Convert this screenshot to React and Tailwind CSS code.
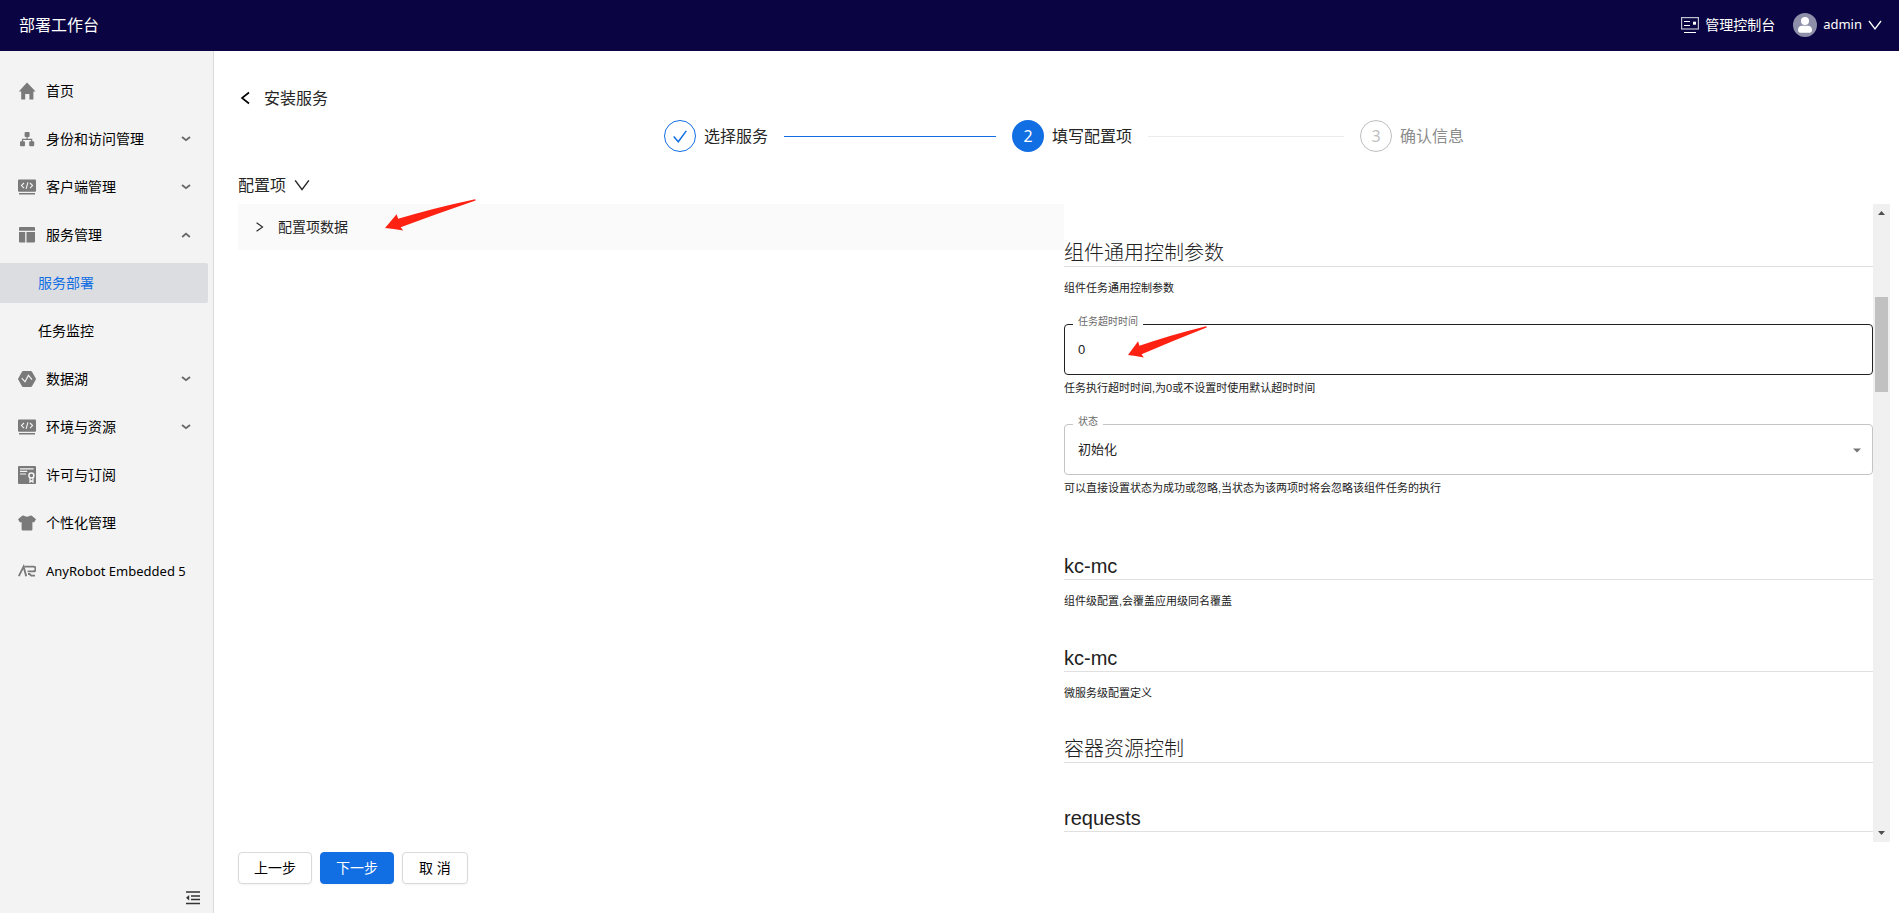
import React, { useState } from 'react';

/* ── Icons ─────────────────────────────────────────────────────────── */

function HomeIcon() {
    return (
        <svg className="w-[18px] h-[18px]" viewBox="0 0 18 18" fill="currentColor">
            <path d="M9 .6 17.6 9.6H15.4V17.4H11.4V12H7.2V17.4H3.2V9.6H.8Z" />
        </svg>
    );
}

function OrgIcon() {
    return (
        <svg className="w-[18px] h-[18px]" viewBox="0 0 18 18" fill="currentColor">
            <rect x="6.6" y="2" width="5" height="5" rx="1" />
            <rect x="2" y="11.2" width="5" height="5" rx="1" />
            <rect x="11.2" y="11.2" width="5" height="5" rx="1" />
            <path d="M9.1 6.5v3M4.5 12V9.4h9.2V12" fill="none" stroke="currentColor" strokeWidth="1.2" />
        </svg>
    );
}

function CodeIcon() {
    return (
        <svg className="w-[18px] h-[18px]" viewBox="0 0 18 18">
            <rect x="0" y="1.5" width="18" height="12.2" rx="1" fill="currentColor" />
            <rect x="1" y="15" width="16" height="1.5" fill="currentColor" />
            <path d="M6 5 3.4 7.6 6 10.2M12 5l2.6 2.6L12 10.2M9.9 4.4 8.1 10.8" fill="none" stroke="#f3f3f3" strokeWidth="1.1" />
        </svg>
    );
}

function LayoutIcon() {
    return (
        <svg className="w-[18px] h-[18px]" viewBox="0 0 18 18" fill="currentColor">
            <path d="M1 2a1 1 0 0 1 1-1h14a1 1 0 0 1 1 1v2.8H1z" />
            <path d="M1 6h6.2v10.5H2a1 1 0 0 1-1-1zM8.5 6H17v9.5a1 1 0 0 1-1 1H8.5z" />
        </svg>
    );
}

function LakeIcon() {
    return (
        <svg className="w-[18px] h-[18px]" viewBox="0 0 18 18">
            <path d="M5.2 1h7.6a1.4 1.4 0 0 1 1.2.7l3.7 6.5a1.6 1.6 0 0 1 0 1.6L14 16.3a1.4 1.4 0 0 1-1.2.7H5.2a1.4 1.4 0 0 1-1.2-.7L.3 9.8a1.6 1.6 0 0 1 0-1.6L4 1.7A1.4 1.4 0 0 1 5.2 1z" fill="currentColor" />
            <path d="M3.8 8.2 7 11.8 10.4 5.4 14 9.6" fill="none" stroke="#f3f3f3" strokeWidth="1.2" />
        </svg>
    );
}

function LicenseIcon() {
    return (
        <svg className="w-[18px] h-[18px]" viewBox="0 0 18 18">
            <rect width="18" height="18" rx="1" fill="currentColor" />
            <path d="M2 2.8h13.6M2 5.4h7.2M2 8h6" stroke="#f3f3f3" strokeWidth="1.2" />
            <circle cx="13.4" cy="9.4" r="2.5" fill="none" stroke="#f3f3f3" strokeWidth="1.5" />
            <path d="M12 11.5V16l1.4-1.1L14.9 16v-4.5" fill="none" stroke="#f3f3f3" strokeWidth="1.3" />
        </svg>
    );
}

function ShirtIcon() {
    return (
        <svg className="w-[18px] h-[18px]" viewBox="0 0 18 18" fill="currentColor">
            <path d="M5.8 1.6c1 1.5 5.4 1.5 6.4 0l1.6.2L18 5.2l-2 3.4-1.6-.7v7.3a1.2 1.2 0 0 1-1.2 1.2H4.8a1.2 1.2 0 0 1-1.2-1.2V7.9l-1.6.7L0 5.2l4.2-3.4z" />
        </svg>
    );
}

function RobotIcon() {
    return (
        <svg className="w-[18px] h-[18px]" viewBox="0 0 18 18" fill="none" stroke="currentColor" strokeWidth="1.9">
            <path d="M.8 14.2 5.6 4.6 8.2 14.2" />
            <path d="M6.4 4.6h8.8a2.3 2.3 0 0 1 0 4.8H9.6M10 12h1.6l1.6 1.6H17" />
        </svg>
    );
}

function ConsoleIcon() {
    return (
        <svg className="w-[18px] h-[18px]" viewBox="0 0 18 18" fill="none" stroke="currentColor">
            <rect x=".6" y="1.6" width="16.8" height="11.4" strokeWidth="1.2" opacity=".75" />
            <path d="M3 5.5h6M3 9.5h6M3 16.5h12" />
            <path d="M12 7.2h3" strokeWidth="3" />
        </svg>
    );
}

function AvatarIcon() {
    return (
        <svg className="w-6 h-6" viewBox="0 0 24 24">
            <circle cx="12" cy="12" r="12" fill="#8e8fa9" />
            <circle cx="12" cy="8" r="4" fill="#fff" />
            <path d="M5 17c0-3 2-4.2 4-4.2h6c2 0 4 1.200 4 4.200 0 2-1 2.700-2.400 2.700H7.400C6 19.700 5 19 5 17z" fill="#fff" />
        </svg>
    );
}

function CollapseIcon() {
    return (
        <svg className="w-4 h-4" viewBox="0 0 16 16" fill="none" stroke="currentColor" strokeWidth="1.3">
            <path d="M1 2h14M6 6h9M6 9.500h9M1 13.500h14" />
            <path d="M4.200 5v5.500L1 7.750z" fill="currentColor" stroke="none" />
        </svg>
    );
}

// thin angle bracket, used for every chevron except the ones in the menu
function Angle({ className, d = 'M1 3l6 8 6-8', width = 1.3 }) {
    return (
        <svg className={className} viewBox="0 0 14 14" fill="none" stroke="currentColor" strokeWidth={width}>
            <path d={d} />
        </svg>
    );
}

function MenuChevron({ open }) {
    return (
        <svg className="w-2.5 h-2.5 text-[#666]" viewBox="0 0 10 10" fill="none" stroke="currentColor" strokeWidth="1.8">
            <path d={open ? 'M1.200 7 5 3.600 8.800 7' : 'M1 3 5 6.200 9 3'} />
        </svg>
    );
}

function RedArrow({ className }) {
    return (
        <svg className={className} viewBox="0 0 90 32" preserveAspectRatio="none" fill="#ff2213">
            <path d="M0 29 11.500 15.300 13 19.800Q48 9 88 .4 90 .2 89.600 1.400 53 14 15.500 28.200L18 31.600Q8 29.500 0 29z" />
        </svg>
    );
}

/* ── Sidebar ───────────────────────────────────────────────────────── */

const MENU = [
    { label: '首页', Icon: HomeIcon },
    { label: '身份和访问管理', Icon: OrgIcon, group: true },
    { label: '客户端管理', Icon: CodeIcon, group: true },
    { label: '服务管理', Icon: LayoutIcon, group: true, children: ['服务部署', '任务监控'] },
    { label: '数据湖', Icon: LakeIcon, group: true },
    { label: '环境与资源', Icon: CodeIcon, group: true },
    { label: '许可与订阅', Icon: LicenseIcon },
    { label: '个性化管理', Icon: ShirtIcon },
    { label: 'AnyRobot Embedded 5', Icon: RobotIcon, latin: true },
];

function Sidebar() {
    const [active, setActive] = useState('服务部署');

    return (
        <aside className="w-[214px] shrink-0 bg-[#f3f3f3] border-r border-[#dcdcdc] flex flex-col">
            <nav className="flex-1 pt-5 flex flex-col gap-2 text-sm text-black">
                {MENU.map(({ label, Icon, group, latin, children }) => (
                    <React.Fragment key={label}>
                        <button className="h-10 pl-[18px] pr-[22px] flex items-center gap-2.5 text-left whitespace-nowrap">
                            <span className="text-[#7a7a7a]"><Icon /></span>
                            <span className={latin ? 'flex-1 text-[13px]' : 'flex-1'}>{label}</span>
                            {group && <MenuChevron open={!!children} />}
                        </button>
                        {children?.map(child => (
                            <button
                                key={child}
                                onClick={() => setActive(child)}
                                className={`h-10 pl-[38px] mr-[5px] text-left rounded-r-xs ${
                                    child === active ? 'bg-[#dcdde1] text-[#126ee3]' : ''
                                }`}
                            >
                                {child}
                            </button>
                        ))}
                    </React.Fragment>
                ))}
            </nav>
            <button aria-label="收起" className="self-end mr-3 mb-[7px] text-[#333]">
                <CollapseIcon />
            </button>
        </aside>
    );
}

/* ── Steps ─────────────────────────────────────────────────────────── */

function Steps() {
    return (
        <ol className="w-[800px] mx-auto flex gap-4 text-base leading-8">
            <li className="flex-1 flex items-center">
                <span className="w-8 h-8 mr-2 rounded-full border border-[#126ee3] text-[#126ee3] flex items-center justify-center">
                    <Angle className="w-4 h-4" d="M1.500 7.500 5.500 12 12.500 2.500" />
                </span>
                <span className="text-[#262626]">选择服务</span>
                <span className="flex-1 h-px ml-4 bg-[#126ee3]" />
            </li>
            <li className="flex-1 flex items-center">
                <span className="w-8 h-8 mr-2 rounded-full bg-[#126ee3] text-white flex items-center justify-center">2</span>
                <span className="text-[#262626]">填写配置项</span>
                <span className="flex-1 h-px ml-4 bg-[#ececec]" />
            </li>
            <li className="flex items-center">
                <span className="w-8 h-8 mr-2 rounded-full border border-[#bfbfbf] text-[#bfbfbf] flex items-center justify-center">3</span>
                <span className="text-[#8c8c8c]">确认信息</span>
            </li>
        </ol>
    );
}

/* ── Config form ───────────────────────────────────────────────────── */

function Section({ title, desc, className = '' }) {
    return (
        <div className={className}>
            <h2 className="pt-0.5 text-xl leading-[26px] font-light border-b border-[#e0e0e0]">{title}</h2>
            {desc && <p className="mt-[11px] text-[11px] leading-5">{desc}</p>}
        </div>
    );
}

function Field({ id, label, help, className = '', children }) {
    return (
        <div className={className}>
            <div className="relative">
                <label htmlFor={id} className="absolute left-[9px] -top-2 px-[5px] bg-white text-[10px] leading-3 text-[#6b6b6b]">
                    {label}
                </label>
                {children}
            </div>
            <p className="mt-[3px] text-[11px] leading-5">{help}</p>
        </div>
    );
}

function ConfigForm() {
    const [timeout, setTimeoutValue] = useState('0');

    return (
        <div className="flex-1 min-w-0 overflow-hidden pt-[34px] text-[#212121] font-['Liberation_Sans','Noto_Sans_CJK_SC',sans-serif]">
            <Section title="组件通用控制参数" desc="组件任务通用控制参数" />

            <Field id="timeout" label="任务超时时间" help="任务执行超时时间,为0或不设置时使用默认超时时间" className="mt-[26px]">
                <input
                    id="timeout"
                    value={timeout}
                    onChange={e => setTimeoutValue(e.target.value)}
                    className="block w-full h-[51px] px-[13px] border border-[#212121] rounded text-[13px] outline-none"
                />
                <RedArrow className="absolute left-16 top-0.5 w-[79px] h-8 pointer-events-none" />
            </Field>

            <Field id="status" label="状态" help="可以直接设置状态为成功或忽略,当状态为该两项时将会忽略该组件任务的执行" className="mt-[26px]">
                <select id="status" className="block w-full h-[51px] px-[13px] border border-[#c4c4c4] rounded text-[13px] appearance-none bg-white outline-none">
                    <option>初始化</option>
                </select>
                <svg className="absolute right-3 top-6 w-2 h-[5px] pointer-events-none" viewBox="0 0 8 5" fill="#757575">
                    <path d="M0 .500h8L4 4.500z" />
                </svg>
            </Field>

            <Section title="kc-mc" desc="组件级配置,会覆盖应用级同名覆盖" className="mt-[53px]" />
            <Section title="kc-mc" desc="微服务级配置定义" className="mt-8" />
            <Section title="容器资源控制" className="mt-[31px]" />
            <Section title="requests" className="mt-10" />
        </div>
    );
}

function ScrollBar() {
    return (
        <div className="w-[17px] shrink-0 bg-[#f0f0f0] flex flex-col items-center text-[#505050]">
            <svg className="w-[17px] h-[17px]" viewBox="0 0 17 17" fill="currentColor"><path d="M5 11h7L8.500 7z" /></svg>
            <div className="w-[13px] h-[95px] mt-[76px] bg-[#c1c1c1]" />
            <svg className="w-[17px] h-[17px] mt-auto" viewBox="0 0 17 17" fill="currentColor"><path d="M5 6h7L8.500 10z" /></svg>
        </div>
    );
}

/* ── Page ──────────────────────────────────────────────────────────── */

export default function App() {
    return (
        <div className="h-screen flex flex-col bg-white font-['Noto_Sans','Noto_Sans_CJK_SC',sans-serif]">
            <header className="h-[51px] shrink-0 pl-[19px] pr-[17px] pb-0.5 bg-[#0a0542] text-white flex items-center justify-between">
                <h1 className="text-base">部署工作台</h1>
                <div className="flex items-center gap-[18px] text-sm">
                    <a href="#console" className="flex items-center gap-1.5">
                        <ConsoleIcon />
                        管理控制台
                    </a>
                    <button className="flex items-center gap-1.5 text-[13px]">
                        <AvatarIcon />
                        admin
                        <Angle className="w-3.5 h-3.5" />
                    </button>
                </div>
            </header>

            <div className="flex-1 min-h-0 flex">
                <Sidebar />

                <main className="flex-1 min-w-0 pl-6 pr-[9px] pt-[35px] pb-[29px] flex flex-col text-[#262626]">
                    <div className="flex items-center gap-3 leading-6">
                        <button aria-label="返回" className="text-black">
                            <Angle className="w-3.5 h-3.5" d="M11 1.500 4 7l7 5.500" width={1.6} />
                        </button>
                        <span>安装服务</span>
                    </div>

                    <div className="mt-2.5">
                        <Steps />
                    </div>

                    <button className="self-start mt-[21px] flex items-center gap-2 leading-6">
                        配置项
                        <Angle className="w-4 h-4" />
                    </button>

                    <div className="flex-1 min-h-0 mt-[7px] flex">
                        <div className="flex-1 min-w-0">
                            <button className="relative w-full h-[46px] pl-4 bg-[#fafafa] flex items-center gap-3 text-sm">
                                <Angle className="w-3 h-3" d="M3 2l7 5-7 5" />
                                配置项数据
                                <RedArrow className="absolute left-[147px] -top-[5px] w-[91px] h-8 pointer-events-none" />
                            </button>
                        </div>
                        <div className="flex-1 min-w-0 flex">
                            <ConfigForm />
                            <ScrollBar />
                        </div>
                    </div>

                    <div className="mt-2.5 flex gap-2 text-sm text-black">
                        <button className="h-8 px-[15px] border border-[#d9d9d9] rounded shadow-xs">上一步</button>
                        <button className="h-8 px-[15px] border border-[#126ee3] bg-[#126ee3] rounded text-white shadow-xs">下一步</button>
                        <button className="h-8 px-4 border border-[#d9d9d9] rounded shadow-xs">取 消</button>
                    </div>
                </main>
            </div>
        </div>
    );
}
